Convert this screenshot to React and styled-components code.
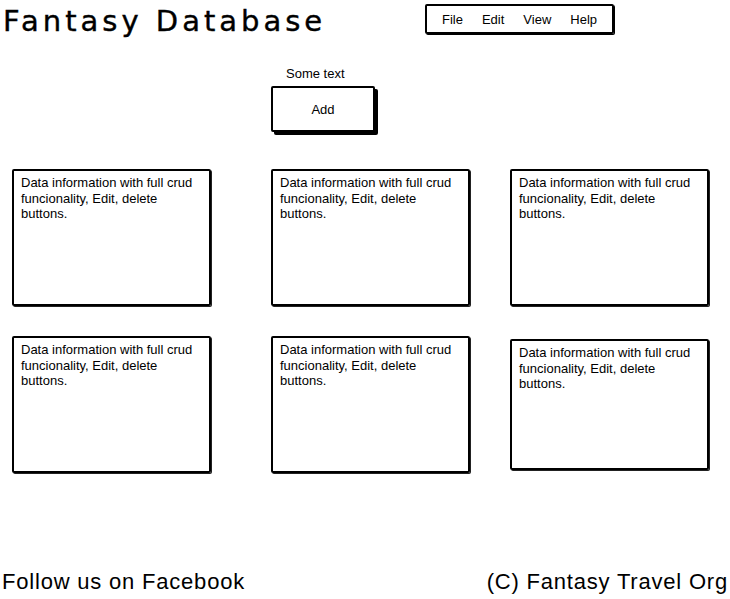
import styled, { createGlobalStyle } from "styled-components";

const Global = createGlobalStyle`
  html, body {
    margin: 0;
    padding: 0;
    background: #ffffff;
  }
  body {
    font-family: "Liberation Sans", Arial, sans-serif;
    color: #000;
  }
`;

const Page = styled.div`
  width: 730px;
  min-height: 100vh;
  display: flex;
  flex-direction: column;
  box-sizing: border-box;
`;

const Header = styled.div`
  display: flex;
  flex-direction: row;
  align-items: flex-start;
  height: 45px;
`;

const Title = styled.div`
  width: 425px;
  padding-left: 3px;
  box-sizing: border-box;
  font-family: "DejaVu Sans", sans-serif;
  font-size: 29px;
  line-height: 40px;
  letter-spacing: 4px;
  margin-top: 1px;
  -webkit-text-stroke: 0.4px #000;
`;

const MenuBar = styled.div`
  margin-top: 4px;
  width: 189px;
  height: 30px;
  box-sizing: border-box;
  border: 2px solid #000;
  border-radius: 2px;
  box-shadow: 1px 1px 0 #000;
  display: flex;
  align-items: center;
  padding-left: 15px;
  gap: 19px;
  font-size: 13px;
`;

const MenuItem = styled.span``;

const AddArea = styled.div`
  margin-top: 21px;
  margin-left: 271px;
  display: flex;
  flex-direction: column;
  align-items: flex-start;
`;

const Label = styled.div`
  font-size: 13px;
  line-height: 15px;
  margin-left: 15px;
`;

const AddButton = styled.button`
  margin-top: 5px;
  width: 104px;
  height: 46px;
  box-sizing: border-box;
  border: 2px solid #000;
  border-radius: 2px;
  background: #fff;
  box-shadow: 3px 3px 0 #000;
  font-family: "Liberation Sans", Arial, sans-serif;
  font-size: 13px;
  color: #000;
  padding: 0;
`;

const Grid = styled.div`
  margin-top: 37px;
  margin-left: 12px;
  display: grid;
  grid-template-columns: 259px 239px 198px;
  row-gap: 30px;
`;

const Card = styled.div`
  width: 199px;
  height: ${(p) => p.$h || 137}px;
  margin-top: ${(p) => p.$dy || 0}px;
  box-sizing: border-box;
  border: 2px solid #000;
  border-radius: 2px;
  box-shadow: 1px 1px 0 #222;
  padding: 4px 7px;
  font-size: 13px;
  line-height: 15.5px;
`;

const Footer = styled.div`
  margin-top: auto;
  display: flex;
  justify-content: space-between;
  padding: 0 2px 4px 2px;
  font-size: 22px;
  line-height: 26px;
  letter-spacing: 0.8px;
`;

const cardText = "Data information with full crud funcionality, Edit, delete buttons.";

export default function App() {
  return (
    <Page>
      <Global />
      <Header>
        <Title>Fantasy Database</Title>
        <MenuBar>
          <MenuItem>File</MenuItem>
          <MenuItem>Edit</MenuItem>
          <MenuItem>View</MenuItem>
          <MenuItem>Help</MenuItem>
        </MenuBar>
      </Header>

      <AddArea>
        <Label>Some text</Label>
        <AddButton>Add</AddButton>
      </AddArea>

      <Grid>
        <Card>{cardText}</Card>
        <Card>{cardText}</Card>
        <Card>{cardText}</Card>
        <Card>{cardText}</Card>
        <Card>{cardText}</Card>
        <Card $dy={3} $h={131}>{cardText}</Card>
      </Grid>

      <Footer>
        <span>Follow us on Facebook</span>
        <span>(C) Fantasy Travel Org</span>
      </Footer>
    </Page>
  );
}
